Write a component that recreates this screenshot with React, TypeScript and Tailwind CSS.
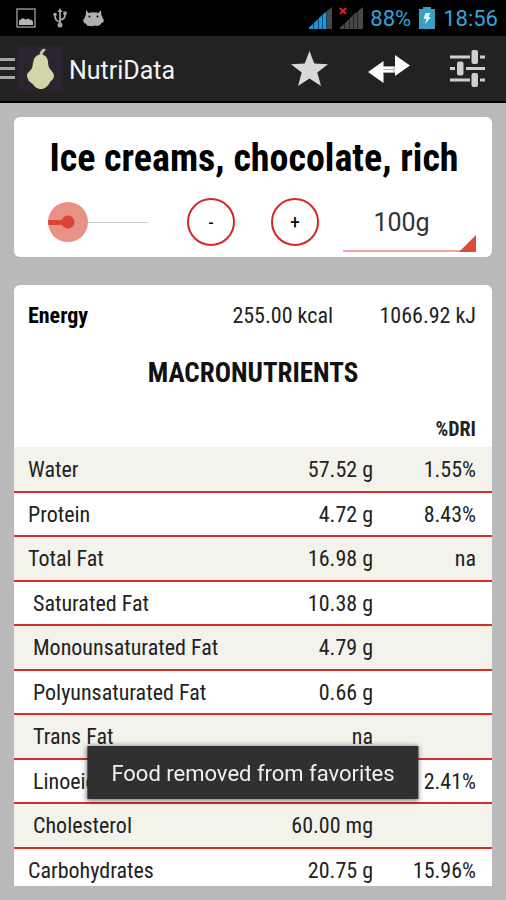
import { useState } from 'react';

interface Nutrient {
  name: string;
  amount: string;
  dri?: string;
  child?: boolean;
}

const nutrients: Nutrient[] = [
  { name: 'Water', amount: '57.52 g', dri: '1.55%' },
  { name: 'Protein', amount: '4.72 g', dri: '8.43%' },
  { name: 'Total Fat', amount: '16.98 g', dri: 'na' },
  { name: 'Saturated Fat', amount: '10.38 g', child: true },
  { name: 'Monounsaturated Fat', amount: '4.79 g', child: true },
  { name: 'Polyunsaturated Fat', amount: '0.66 g', child: true },
  { name: 'Trans Fat', amount: 'na', child: true },
  { name: 'Linoeic Acid', amount: '0.41 g', dri: '2.41%', child: true },
  { name: 'Cholesterol', amount: '60.00 mg', child: true },
  { name: 'Carbohydrates', amount: '20.75 g', dri: '15.96%' },
];

function StatusBar() {
  return (
    <div className="flex h-9 shrink-0 items-center justify-between bg-black pr-2 pl-4 text-[#33a5d8]">
      <div className="flex items-center">
        <svg width="20" height="20" viewBox="0 0 20 20" className="mr-[17px]">
          <rect x="1" y="1" width="18" height="18" fill="none" stroke="#8f8f8f" strokeWidth="1.5" />
          <path d="M3 17v-3.500q0-2 2-2 1-2 3-1 1.500 1.500 3 .5 2-1 3 .8 3 0 3 2.700V17z" fill="#b5b5b5" />
        </svg>
        <svg width="14" height="20" viewBox="0 0 14 20" className="mr-4" fill="#a5a5a5" stroke="#a5a5a5">
          <path d="M7 3v13M7 14C2.500 12.500 2 11 2 7M7 12c4-1 5-2 5-6" fill="none" strokeWidth="1.8" />
          <path d="M7 0l2.500 4h-5z" stroke="none" />
          <circle cx="7" cy="17" r="2.500" stroke="none" />
          <circle cx="2" cy="6.500" r="1.800" stroke="none" />
          <path d="M10.300 3.500h3.400v3.200h-3.400z" stroke="none" />
        </svg>
        <svg width="21" height="17" viewBox="0 0 21 17">
          <path d="M3 0l2.500 3Q10.500 1.500 15.500 3L18 0l.3 5q1.200 1 1.200 3 1.500 1 1.300 3-.5 2-2.300 2-1.500 3-4 3-1.500 0-2.500-.7-3 1.700-5 .4-3 .8-4-2Q.2 13 .2 10.500q.2-2 1.600-2.500 0-2 1-3z" fill="#b0b0b0" />
          <circle cx="6.500" cy="6.500" r="1" fill="#000" />
          <circle cx="14.500" cy="6.500" r="1" fill="#000" />
        </svg>
      </div>
      <div className="flex items-center">
        <svg width="23" height="22" viewBox="0 0 23 22" className="mr-[7px]">
          <path d="M0 22v-1.500L4.500 16.500V22zM5 22v-6l4-4V22zM9.500 22V11.500l3.500-3.500v14zM13.500 22V7.500L17.500 4.500V22z" fill="#1b94e0" />
          <path d="M18 22V4L23 0v22z" fill="#484848" />
        </svg>
        <svg width="24" height="22" viewBox="0 0 24 22" className="mr-[7px]">
          <path d="M1 22v-1.500L5.500 16.500V22zM6 22v-6l4-4V22zM10.500 22V11.500l3.500-3.500v14zM14.500 22V7.500L18.500 4.500V22zM19 22V4L24 0v22z" fill="#484848" />
          <path d="M1 1l6 6M7 1L1 7" stroke="#d92020" strokeWidth="2" />
        </svg>
        <span className="text-[22px]">88%</span>
        <svg width="16" height="22" viewBox="0 0 16 22" className="mx-2">
          <path d="M0 2h4V0h8v2h4v20H0z" fill="#3a9fc6" />
          <path d="M6.500 6h5L9.500 10H12l-6 7 1.500-5H4.500z" fill="#e4f4fa" />
        </svg>
        <span className="text-[22px]">18:56</span>
      </div>
    </div>
  );
}

function ActionBar() {
  return (
    <header className="flex h-[67px] shrink-0 items-center border-b-2 border-black bg-[#222]">
      <button type="button" aria-label="Open menu" className="mr-[3px]">
        <svg width="15" height="21" viewBox="0 0 15 21" fill="#a8a8a8">
          <path d="M0 0h15v3H0zM0 9h15v3H0zM0 18h15v3H0z" />
        </svg>
      </button>
      <svg width="45" height="45" viewBox="0 0 45 45" className="mr-[6px]">
        <rect width="45" height="45" fill="#2b2430" />
        <path d="M21.500 10q-.5-5.500 4.500-7.500l2 1.500q-3.500 2-3.500 6z" fill="#c3c79c" />
        <path d="M23 8.500c4 0 6.500 3 7 7 .2 4 .5 6 2.500 8 1.500 2.500 4 3.500 3.300 7.500-.5 3-3 3.500-4 5.500-1.800 4-5.300 6.500-9 6.500s-6.500-2.500-8-5c-1.500-1.500-4.500-2.500-4.800-5-1-1.500-1-3.500-1-5 1-1 2.500-3 4.500-5 1.500-2.800 1-5 2-8 .8-4 3.500-6.500 7.500-6.500z" fill="#d2d6a6" />
      </svg>
      <h1 className="flex-1 pt-1 text-[25px] text-[#f4f4f4]">NutriData</h1>
      <div className="flex items-center pr-[21px]">
        <button type="button" aria-label="Favorite" className="mr-10">
          <svg width="37" height="36" viewBox="0 0 37 36" fill="#d8d8d8">
            <path d="M18.500 0l4.800 12.600L37 13.300 26.300 21.500 30 35l-11.500-7.500L7 35l3.700-13.500L0 13.300l13.700-.7z" />
          </svg>
        </button>
        <button type="button" aria-label="Compare" className="mr-10">
          <svg width="42" height="28" viewBox="0 0 42 28">
            <path d="M0 17L15.500 6v5.500H27V0l15 10.500L27 21v-3.500H15.500V28z" fill="#fff" />
            <path d="M15.500 11.500H26v6H15.500M15.500 14.500H26" fill="none" stroke="#aaa" strokeWidth="1" />
          </svg>
        </button>
        <button type="button" aria-label="Settings">
          <svg width="35" height="37" viewBox="0 0 35 37" fill="#cfcfcf">
            <path d="M0 5.500h20v3H0zM30 5.500h5v3h-5zM0 17h5v3H0zM16 17h19v3H16zM0 28.500h20v3H0zM30 28.500h5v3h-5z" />
            <rect x="21.500" y="0" width="6.500" height="14" rx="2" />
            <rect x="7" y="11.500" width="6.500" height="14" rx="2" />
            <rect x="21.500" y="23" width="6.500" height="14" rx="2" />
          </svg>
        </button>
      </div>
    </header>
  );
}

function FoodCard() {
  const [grams, setGrams] = useState(100);

  return (
    <section className="shrink-0 rounded-md bg-white pt-4 pr-4 pb-[5px] pl-[34px]">
      <h2 className="-ml-4 text-center text-[38px] leading-[50px] font-bold whitespace-nowrap text-black">
        Ice creams, chocolate, rich
      </h2>
      <div className="mt-[9px] flex h-[60px] items-center">
        <input
          type="range"
          aria-label="Portion"
          min={100}
          max={1000}
          value={grams}
          onChange={(e) => setGrams(Number(e.target.value))}
          className="mr-[39px] h-10 w-[100px] appearance-none bg-[linear-gradient(#ccc,#ccc)] bg-[length:100%_1px] bg-center bg-no-repeat [&::-webkit-slider-thumb]:size-10 [&::-webkit-slider-thumb]:appearance-none [&::-webkit-slider-thumb]:rounded-full [&::-webkit-slider-thumb]:bg-[radial-gradient(circle,#dc4535_6px,transparent_7px),linear-gradient(#dc4535,#dc4535)] [&::-webkit-slider-thumb]:bg-[length:100%_100%,20px_5px] [&::-webkit-slider-thumb]:bg-[position:0_0,0_center] [&::-webkit-slider-thumb]:bg-no-repeat [&::-webkit-slider-thumb]:bg-[#ea9186]"
        />
        <button
          type="button"
          onClick={() => setGrams(Math.max(100, grams - 10))}
          className="mr-9 size-12 rounded-full border-2 border-[#d6262a] text-xl text-black"
        >
          -
        </button>
        <button
          type="button"
          onClick={() => setGrams(grams + 10)}
          className="mr-6 size-12 rounded-full border-2 border-[#d6262a] text-xl text-black"
        >
          +
        </button>
        <div className="relative h-full flex-1">
          <select
            aria-label="Amount"
            className="h-full w-full appearance-none border-b-2 border-[#efa69e] bg-transparent pt-1 pr-4 text-center font-[Roboto] text-[25px] text-[#333]"
          >
            <option>{grams}g</option>
          </select>
          <svg width="17" height="17" viewBox="0 0 17 17" className="pointer-events-none absolute right-0 bottom-0">
            <path d="M17 0v17H0z" fill="#dc4a3a" />
          </svg>
        </div>
      </div>
    </section>
  );
}

function NutrientsCard() {
  return (
    <section className="min-h-0 flex-1 overflow-hidden rounded-t-md bg-white pt-2 text-[22px] text-[#222]">
      <div className="flex h-11 items-center pr-4 pl-[14px]">
        <span className="flex-1 font-bold text-black">Energy</span>
        <span>255.00 kcal</span>
        <span className="w-[143px] text-right">1066.92 kJ</span>
      </div>
      <h3 className="mt-3 text-center text-[27px] leading-[48px] font-bold text-[#111]">MACRONUTRIENTS</h3>
      <table className="mt-[10px] w-full table-fixed border-collapse">
        <colgroup>
          <col />
          <col className="w-[130px]" />
          <col className="w-[119px]" />
        </colgroup>
        <thead>
          <tr className="h-10">
            <th />
            <th />
            <th className="pt-1 pr-4 text-right text-xl font-bold">%DRI</th>
          </tr>
        </thead>
        <tbody>
          {nutrients.map((n) => (
            <tr
              key={n.name}
              className="h-11 border-b-2 border-[#d62f28] odd:h-[45px] odd:bg-[#f3f2eb]"
            >
              <td className={n.child ? 'pl-[19px]' : 'pl-[14px]'}>{n.name}</td>
              <td className="text-right">{n.amount}</td>
              <td className="pr-4 text-right">{n.dri}</td>
            </tr>
          ))}
        </tbody>
      </table>
    </section>
  );
}

export default function App() {
  return (
    <div className="flex h-screen flex-col overflow-hidden bg-[#bababa] font-[Roboto,sans-serif]">
      <StatusBar />
      <ActionBar />
      <main className="flex min-h-0 flex-1 flex-col gap-7 px-[14px] py-[14px] font-['Roboto_Condensed','Liberation_Sans_Narrow',Roboto,sans-serif]">
        <FoodCard />
        <NutrientsCard />
      </main>
      <div
        role="status"
        className="fixed bottom-[101px] left-1/2 flex h-[53px] -translate-x-1/2 items-center bg-[#303030] px-6 pt-[2px] text-[22px] whitespace-nowrap text-[#f0f0f0] shadow-[0_1px_5px_1px_rgba(0,0,0,0.5)]"
      >
        Food removed from favorites
      </div>
    </div>
  );
}
